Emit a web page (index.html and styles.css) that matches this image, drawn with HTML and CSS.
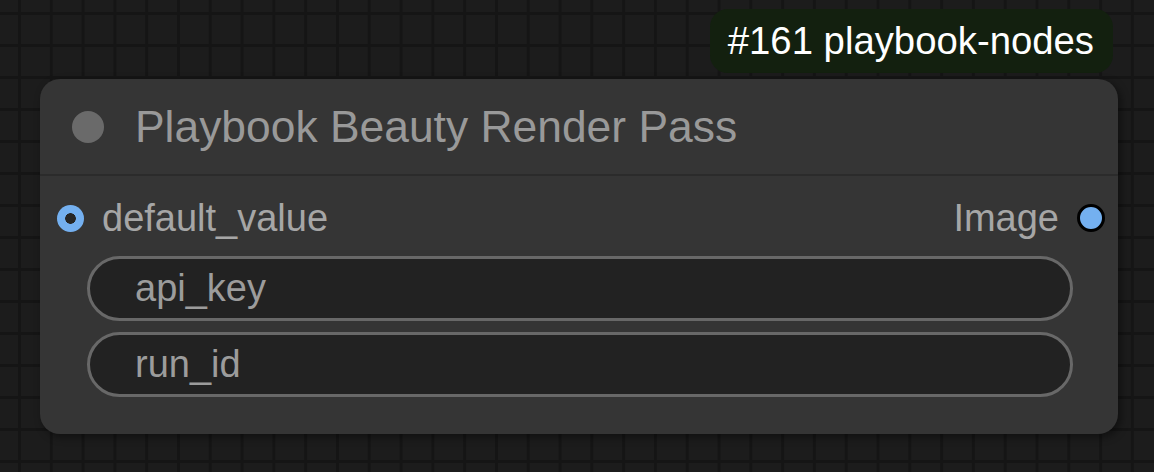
FILE: index.html
```html
<!DOCTYPE html>
<html>
<head>
<meta charset="utf-8">
<link rel="stylesheet" href="styles.css">
</head>
<body>
<div class="canvas">
  <div class="badge">#161 playbook-nodes</div>
  <div class="node">
    <div class="node-title">
      <span class="title-dot"></span>
      <span class="title-text">Playbook Beauty Render Pass</span>
    </div>
    <div class="node-body">
      <div class="slot-row">
        <div class="slot slot-in"><span class="dot-in"></span><span class="slot-label">default_value</span></div>
        <div class="slot slot-out"><span class="slot-label">Image</span><span class="dot-out"></span></div>
      </div>
      <div class="widget">api_key</div>
      <div class="widget">run_id</div>
    </div>
  </div>
</div>
</body>
</html>
```
FILE: styles.css
```css
html, body {
  margin: 0;
  height: 100%;
}
body {
  background-color: #1c1c1c;
  background-image:
    linear-gradient(to right, #151515 0 3px, transparent 3px),
    linear-gradient(to bottom, #151515 0 3px, transparent 3px);
  background-size: 31.8px 32px;
  background-position: 18px 12px;
  font-family: "Liberation Sans", Arial, Helvetica, sans-serif;
  overflow: hidden;
}
.canvas {
  display: flex;
  flex-direction: column;
  align-items: flex-start;
  padding: 9px 0 0 40px;
  width: 1078px;
}
.badge {
  align-self: flex-end;
  margin-right: 5px;
  height: 64px;
  padding: 0 19px 0 18px;
  background: #13200f;
  border-radius: 18px;
  color: #ffffff;
  font-size: 38.3px;
  display: flex;
  align-items: center;
}
.node {
  margin-top: 6px;
  width: 1078px;
  height: 355px;
  background: #353535;
  border-radius: 20px;
  box-shadow: 3px 3px 8px rgba(0, 0, 0, 0.45);
  display: flex;
  flex-direction: column;
}
.node-title {
  height: 97px;
  box-sizing: border-box;
  border-bottom: 2px solid #2b2b2b;
  display: flex;
  align-items: center;
  padding-left: 32px;
}
.title-dot {
  width: 32px;
  height: 32px;
  border-radius: 50%;
  background: #6a6a6a;
  margin-right: 31px;
  flex: none;
}
.title-text {
  color: #999999;
  font-size: 44.4px;
}
.node-body {
  display: flex;
  flex-direction: column;
  padding-top: 12px;
}
.slot-row {
  height: 60px;
  display: flex;
  align-items: center;
  justify-content: space-between;
  padding: 0 13px 0 17px;
}
.slot {
  display: flex;
  align-items: center;
}
.slot-label {
  color: #a6a6a6;
  font-size: 38px;
}
.dot-in {
  width: 27px;
  height: 27px;
  border-radius: 50%;
  background: radial-gradient(circle, #262626 0 5px, #74b0f0 5.6px);
  margin-right: 18px;
}
.dot-out {
  width: 22px;
  height: 22px;
  border-radius: 50%;
  background: #74b0f0;
  border: 3px solid #000;
  margin-left: 18px;
}
.widget {
  height: 65px;
  box-sizing: border-box;
  margin: 0 45px 0 47px;
  border: 3px solid #686868;
  border-radius: 33px;
  background: #222222;
  color: #9c9c9c;
  font-size: 38px;
  display: flex;
  align-items: center;
  padding-left: 45px;
}
.slot-row + .widget {
  margin-top: 8px;
}
.widget + .widget {
  margin-top: 11px;
}
```
